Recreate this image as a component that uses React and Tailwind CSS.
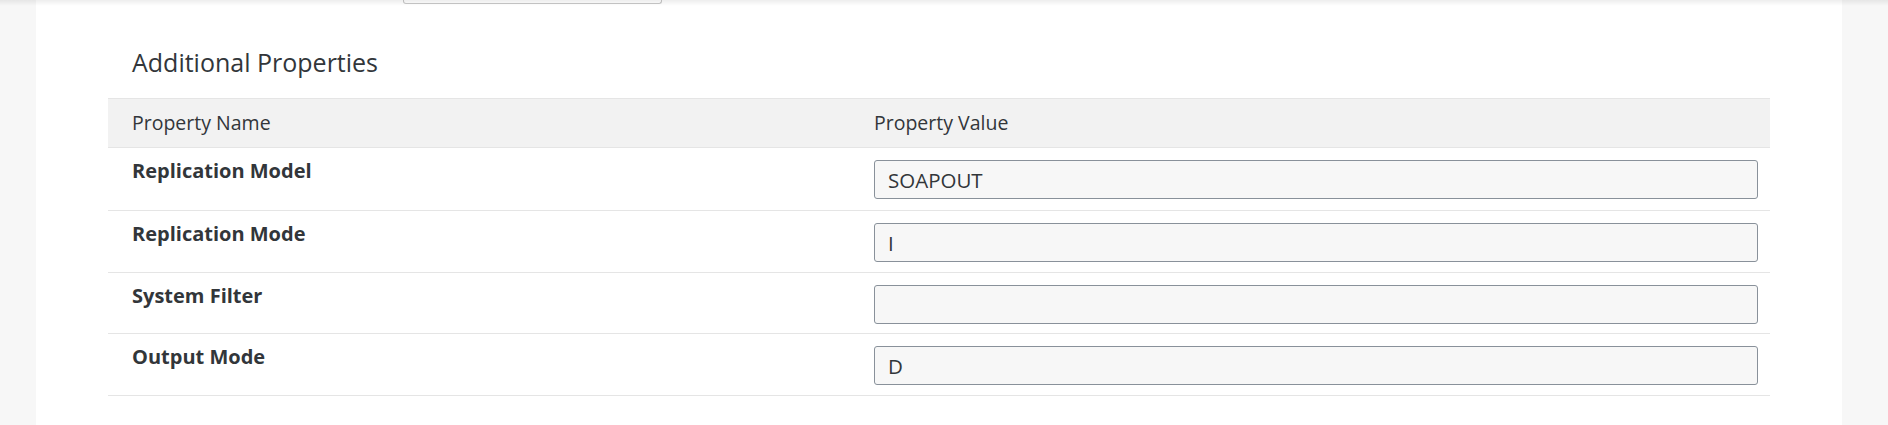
const rows = [
  { name: "Replication Model", value: "SOAPOUT", h: "h-[63px]" },
  { name: "Replication Mode", value: "I", h: "h-[62px]" },
  { name: "System Filter", value: "", h: "h-[61px]" },
  { name: "Output Mode", value: "D", h: "h-[62px]" },
];

const font = { fontFamily: '"Open Sans", "Liberation Sans", sans-serif' };

export default function App() {
  return (
    <div className="relative h-[425px] overflow-hidden bg-[#f7f7f7] text-[#32363a]" style={font}>
      <div className="ml-[36px] h-full w-[1806px] bg-white">
        {/* tail of the field from the section above */}
        <div className="ml-[367px] h-[4px] w-[259px] rounded-b-[3px] border-x border-b border-[#c8c8c8] bg-white" />

        <h2 className="mt-[42px] pl-[96px] text-[25px] leading-[32px] font-normal">
          Additional Properties
        </h2>

        <div className="mx-[72px] mt-[20px]">
          <div className="grid h-[50px] grid-cols-[766px_1fr] items-center border-y border-[#e5e5e5] bg-[#f2f2f2] text-[19.5px]">
            <div className="pl-[24px]">Property Name</div>
            <div>Property Value</div>
          </div>

          {rows.map((row) => (
            <div
              key={row.name}
              className={`grid grid-cols-[766px_1fr] border-b border-[#e5e5e5] ${row.h}`}
            >
              <div className="pl-[24px] pt-[9px] text-[20px] leading-[28px] font-bold">
                {row.name}
              </div>
              <div className="pr-[12px] pt-[12px]">
                <input
                  readOnly
                  value={row.value}
                  className="h-[39px] w-full rounded-[3px] border border-[#89919a] bg-[#f7f7f7] pl-[13px] text-[20.5px] text-[#32363a] outline-none"
                  style={font}
                />
              </div>
            </div>
          ))}
        </div>
      </div>

      <div className="pointer-events-none absolute inset-x-0 top-0 h-[6px] bg-linear-to-b from-black/[0.07] to-transparent" />
    </div>
  );
}
